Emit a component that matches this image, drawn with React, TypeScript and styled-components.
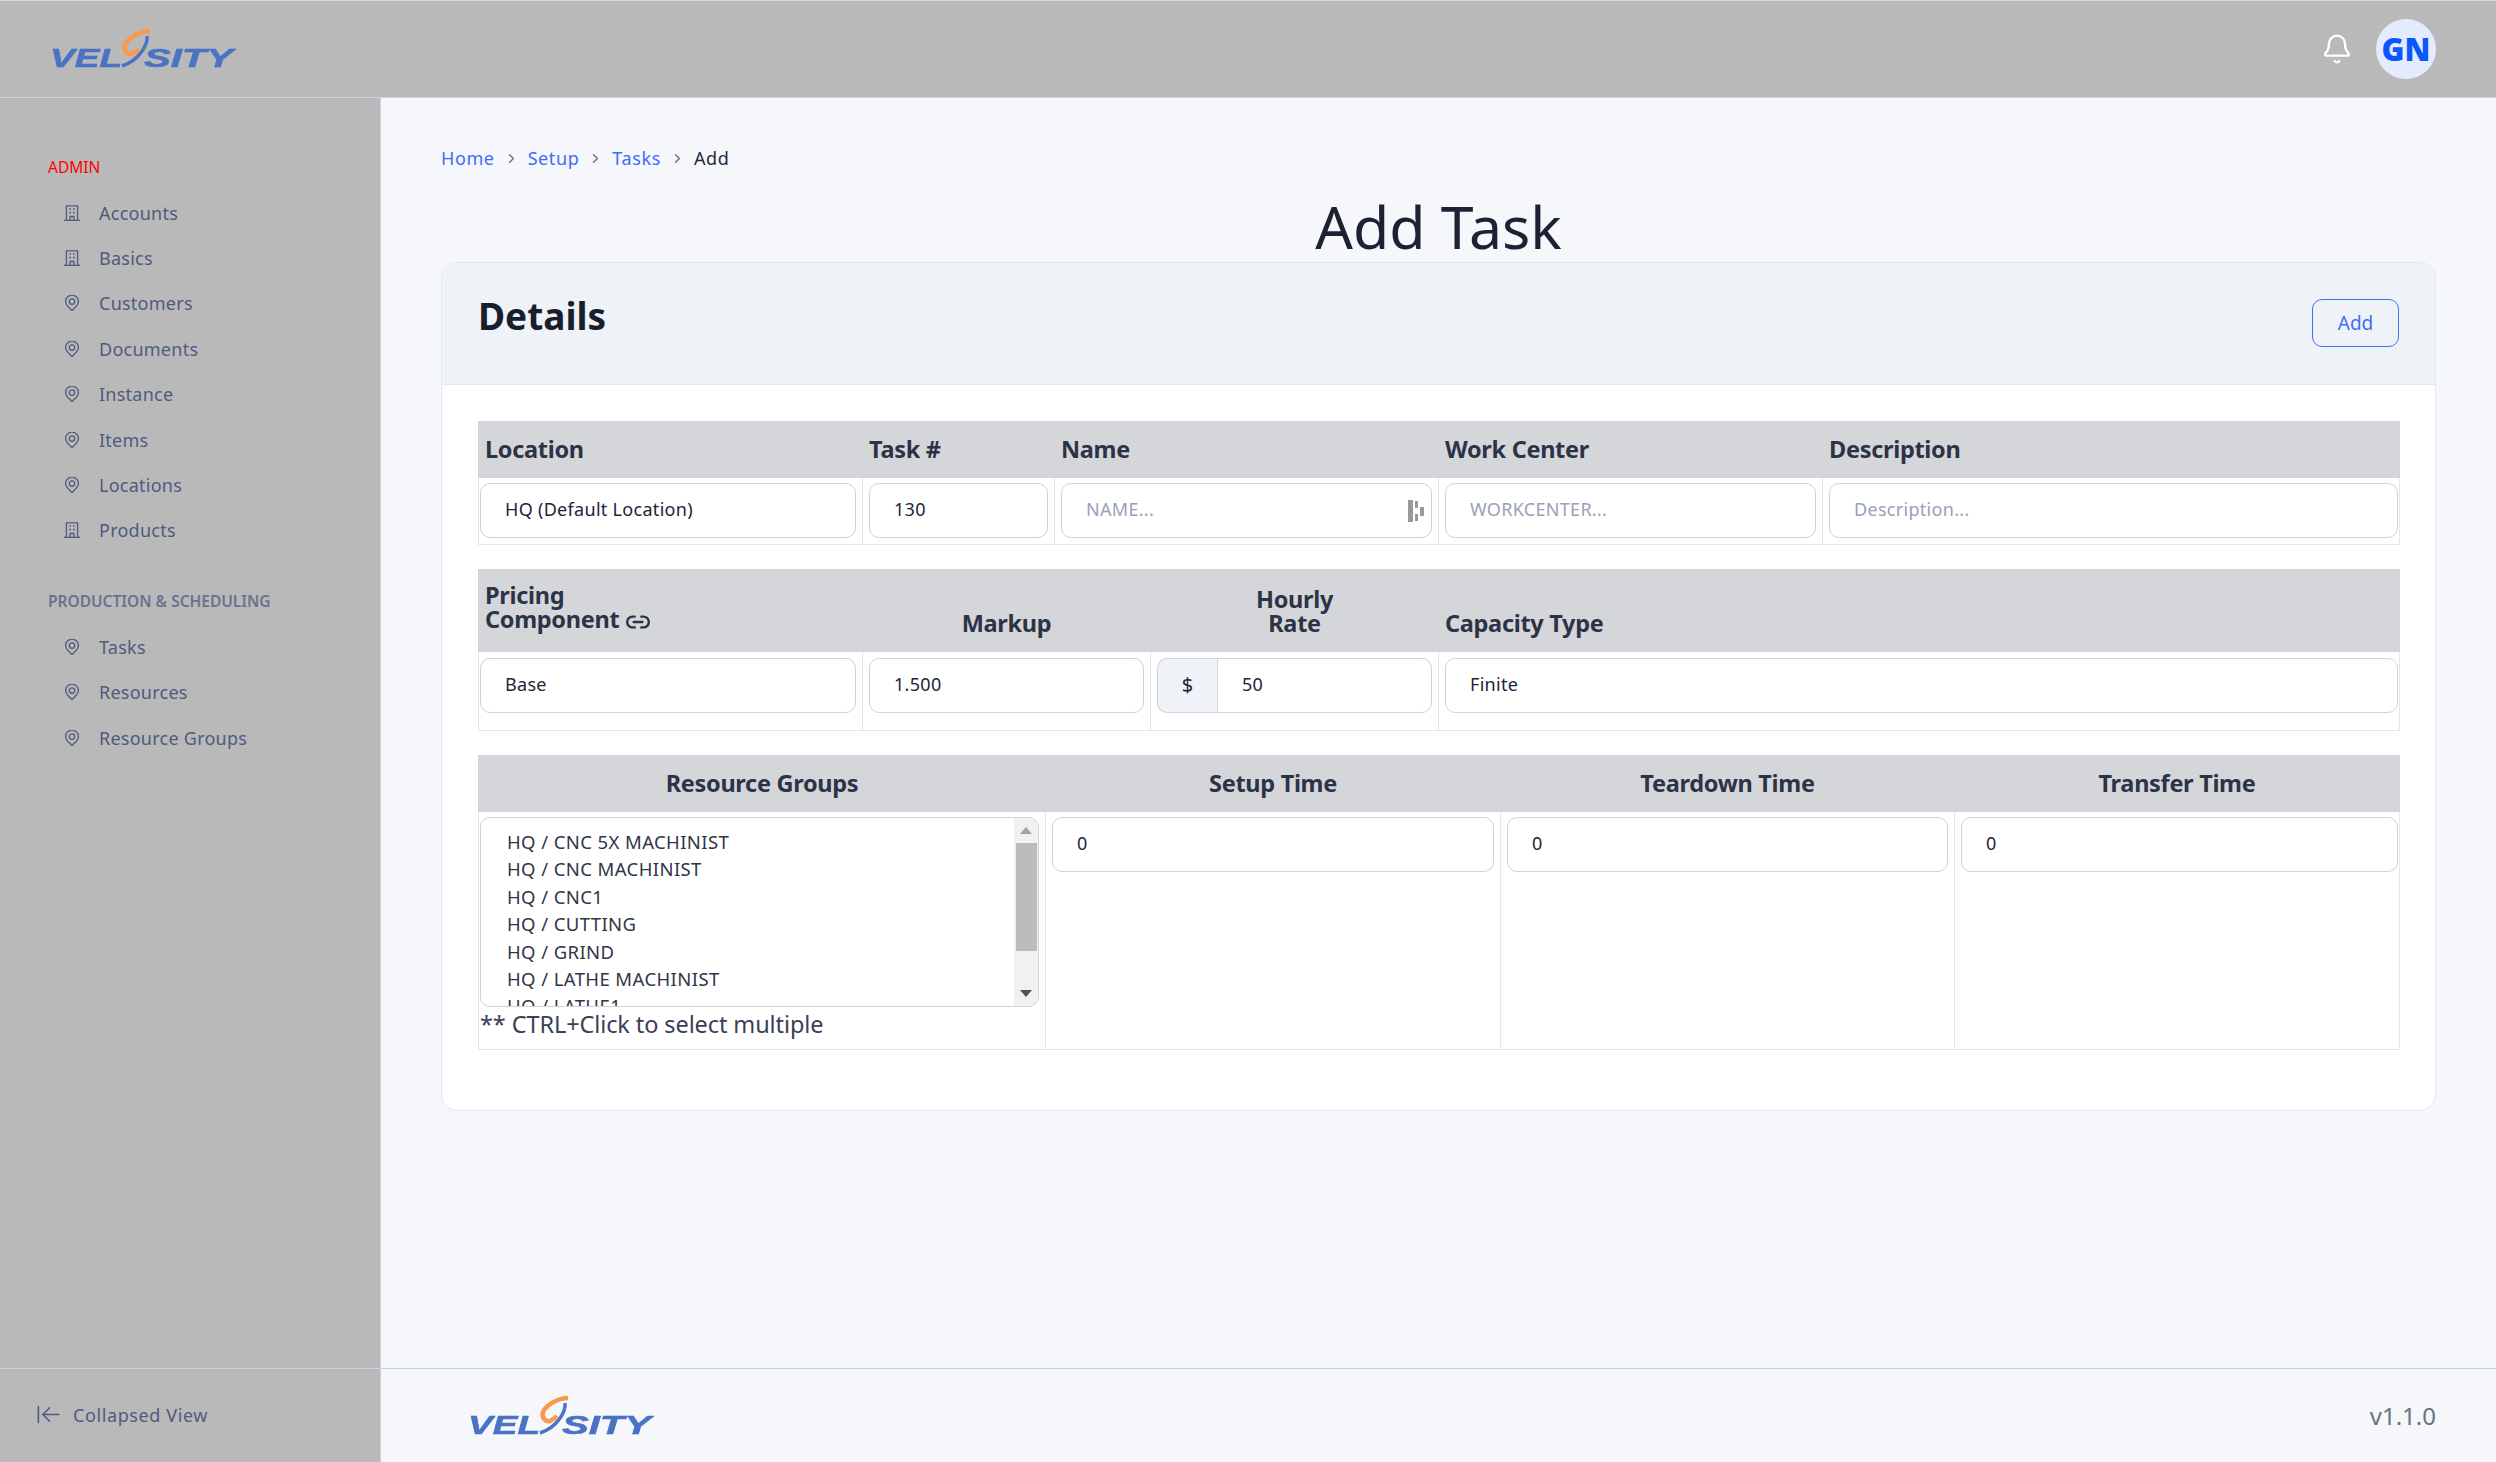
import { ArrowLeftToLine, Bell, ChevronRight, Link2 } from "lucide-react";
import styled, { createGlobalStyle } from "styled-components";

const FONT = `"Noto Sans", Lato, "Liberation Sans", sans-serif`;

const GlobalStyle = createGlobalStyle`
  html, body {
    margin: 0;
    padding: 0;
    background: #f5f7fb;
    font-family: ${FONT};
    color: #1e2436;
  }
  * { box-sizing: border-box; }
`;

const Page = styled.div`
  height: 100vh;
  display: flex;
  flex-direction: column;
  overflow: hidden;
`;

const TopBar = styled.header`
  flex: 0 0 98px;
  display: flex;
  align-items: center;
  justify-content: space-between;
  padding: 0 60px 0 50px;
  background: #b9b9b9;
  border-top: 1px solid #d9d9d9;
  border-bottom: 1px solid #ced2dc;
`;

const TopActions = styled.div`
  display: flex;
  align-items: center;
  gap: 23px;
  color: #fff;
`;

const Avatar = styled.div`
  width: 60px;
  height: 60px;
  border-radius: 50%;
  background: #e4ebff;
  color: #0b57fb;
  display: flex;
  align-items: center;
  justify-content: center;
  font-size: 31px;
  font-weight: 900;
`;

const Body = styled.div`
  flex: 1;
  display: flex;
  min-height: 0;
`;

const Sidebar = styled.aside`
  flex: 0 0 381px;
  display: flex;
  flex-direction: column;
  background: #b9b9b9;
  border-right: 1px solid #c9d0e2;
`;

const Nav = styled.nav`
  flex: 1;
  padding-top: 52px;
`;

const SectionLabel = styled.div<{ $active?: boolean }>`
  height: 34px;
  margin: ${(p) => (p.$active ? "0" : "31px")} 0 6px;
  padding-left: 48px;
  line-height: 34px;
  font-size: 15.5px;
  font-weight: ${(p) => (p.$active ? 400 : 600)};
  color: ${(p) => (p.$active ? "#ff0000" : "#68738f")};
`;

const NavItem = styled.a`
  height: 45.4px;
  display: flex;
  align-items: center;
  gap: 19px;
  padding-left: 64px;
  font-size: 18px;
  letter-spacing: 0.25px;
  color: #4f5b7e;
`;

const IconSlot = styled.svg`
  flex: 0 0 16px;
  width: 16px;
  height: 16px;
  fill: none;
  stroke: #4f5b7e;
  stroke-width: 1.3;
`;

const Collapse = styled.div`
  flex: 0 0 94px;
  display: flex;
  align-items: center;
  gap: 11px;
  padding: 0 0 2px 35px;
  border-top: 1px solid #c9d0e2;
  font-size: 18px;
  letter-spacing: 0.6px;
  color: #4f5b7e;
`;

const Main = styled.main`
  flex: 1;
  min-width: 0;
  display: flex;
  flex-direction: column;
`;

const Content = styled.div`
  flex: 1;
  padding: 46px 60px 0;
`;

const Crumbs = styled.div`
  display: flex;
  align-items: center;
  height: 28px;
  gap: 9px;
  font-size: 18px;
  letter-spacing: 0.6px;
  color: #6f7689;
`;

const Crumb = styled.a<{ $current?: boolean }>`
  color: ${(p) => (p.$current ? "#252b3b" : "#3f6cf8")};
`;

const Title = styled.h1`
  margin: 18px 0 0;
  height: 72px;
  line-height: 72px;
  text-align: center;
  font-size: 59px;
  font-weight: 400;
  color: #1c2233;
`;

const Card = styled.section`
  background: #fff;
  border: 1px solid #e4e7ef;
  border-radius: 16px;
  overflow: hidden;
`;

const CardHead = styled.div`
  height: 122px;
  display: flex;
  justify-content: space-between;
  padding: 28px 36px 0;
  background: #eff2f7;
  border-bottom: 1px solid #e4e7ef;
`;

const CardTitle = styled.h2`
  margin: 0;
  line-height: 50px;
  font-size: 37px;
  font-weight: 700;
  color: #181e2e;
`;

const AddButton = styled.button`
  width: 87px;
  height: 48px;
  margin-top: 8px;
  background: transparent;
  border: 1.5px solid #3f74f6;
  border-radius: 10px;
  font-family: ${FONT};
  font-size: 19px;
  color: #3f6cf8;
`;

const CardBody = styled.div`
  padding: 36px 35px 60px 36px;
`;

const Grid = styled.table<{ $gap?: number }>`
  width: 1921px;
  margin-top: ${(p) => p.$gap ?? 0}px;
  table-layout: fixed;
  border-collapse: collapse;
`;

const Col = styled.col<{ $w: number }>`
  width: ${(p) => p.$w}px;
`;

const HeadRow = styled.tr<{ $h: number }>`
  height: ${(p) => p.$h}px;
`;

const Head = styled.th<{ $center?: boolean }>`
  padding: 0 6px 16px;
  vertical-align: bottom;
  text-align: ${(p) => (p.$center ? "center" : "left")};
  background: #d5d6da;
  border: 1px solid #cfd3dc;
  line-height: 24px;
  font-size: 23.5px;
  font-weight: 700;
  letter-spacing: -0.3px;
  color: #2c3346;
`;

const LinkMark = styled(Link2)`
  vertical-align: -7px;
`;

const Cell = styled.td<{ $h: number; $top?: number }>`
  height: ${(p) => p.$h}px;
  padding: ${(p) => p.$top ?? 5}px 6px 0;
  vertical-align: top;
  border: 1px solid #e4e7ef;

  &:first-child { padding-left: 1px; }
  &:last-child { padding-right: 1px; }
`;

const Field = styled.input`
  display: block;
  width: 100%;
  height: 55px;
  padding: 0 24px 3px;
  background: #fff;
  border: 1.5px solid #d0d3de;
  border-radius: 10px;
  outline: none;
  font-family: ${FONT};
  font-size: 18px;
  letter-spacing: 0.3px;
  color: #1e2436;

  &::placeholder { color: #9aa1b6; opacity: 1; }
`;

const FieldWrap = styled.div`
  position: relative;
`;

const AutofillMark = styled.svg`
  position: absolute;
  right: 7px;
  top: 17px;
  width: 17px;
  height: 22px;
  fill: #9a9a98;
`;

const Group = styled.div`
  display: flex;
`;

const Addon = styled.span`
  flex: 0 0 60px;
  height: 55px;
  display: flex;
  align-items: center;
  justify-content: center;
  padding-bottom: 3px;
  background: #eff2f7;
  border: 1.5px solid #d0d3de;
  border-right: 0;
  border-radius: 10px 0 0 10px;
  font-size: 20px;
`;

const GroupField = styled(Field)`
  border-radius: 0 10px 10px 0;
`;

const ListBox = styled.div`
  height: 190px;
  display: flex;
  background: #fff;
  border: 1.5px solid #d0d3de;
  border-radius: 10px;
  overflow: hidden;
`;

const ListItems = styled.div`
  flex: 1;
  min-width: 0;
  padding: 10px 0 0 26px;
  font-size: 18.5px;
  letter-spacing: 0.4px;
  color: #2f3648;
`;

const ListItem = styled.div`
  height: 27.4px;
  line-height: 27.4px;
`;

const ScrollTrack = styled.div`
  flex: 0 0 24px;
  display: flex;
  flex-direction: column;
  align-items: center;
  background: #f1f1f1;
`;

const ScrollThumb = styled.div`
  flex: 0 0 108px;
  width: 21px;
  margin-bottom: auto;
  background: #bcbcbc;
`;

const ScrollArrow = styled.div<{ $up?: boolean }>`
  flex: 0 0 25px;
  display: flex;
  align-items: center;
  justify-content: center;
  color: ${(p) => (p.$up ? "#a3a3a3" : "#505050")};
`;

const Note = styled.div`
  line-height: 34px;
  font-size: 23.5px;
  letter-spacing: -0.1px;
  color: #3a4154;
`;

const Footer = styled.footer`
  flex: 0 0 94px;
  display: flex;
  align-items: center;
  justify-content: space-between;
  padding: 0 60px 0 87px;
  border-top: 1px solid #c9d0e2;
`;

const Version = styled.span`
  font-size: 24px;
  color: #6b7280;
`;

const LogoMark = styled.svg`
  display: block;
  width: 184px;
  height: 38px;
  overflow: visible;
  filter: blur(0.45px);
`;

const Logo = () => (
  <LogoMark viewBox="0 0 184 38">
    <g
      fill="#4a73c4"
      stroke="#4a73c4"
      strokeWidth="0.6"
      fontFamily="'Liberation Sans', sans-serif"
      fontSize="26.5"
      fontStyle="italic"
      fontWeight="700"
    >
      <text x="0" y="37" textLength="72" lengthAdjust="spacingAndGlyphs">
        VEL
      </text>
      <text x="94" y="37" textLength="89" lengthAdjust="spacingAndGlyphs">
        SITY
      </text>
    </g>
    <path d="M97 6C98 14 90 30 72 36" fill="none" stroke="#4a73c4" strokeWidth="3.5" />
    <path
      d="M100 1C90 1 78 8 75 15C73 21 78 25 82 24C85 23 87 21 89 19"
      fill="none"
      stroke="#f79a4d"
      strokeWidth="4.5"
    />
  </LogoMark>
);

const BuildingIcon = () => (
  <IconSlot viewBox="0 0 16 16">
    <path d="M0 15.4H16M2.4 15.4V.8H13.6V15.4M6 15.4V11.5H10V15.4" />
    <path d="M5.4 4H7M9 4H10.6M5.4 7.6H7M9 7.6H10.6" strokeWidth="1.6" />
  </IconSlot>
);

const PinIcon = () => (
  <IconSlot viewBox="0 0 16 16">
    <path d="M8 15.6C5 13 1.6 10 1.6 6.6A6.4 6.4 0 0 1 14.4 6.6C14.4 10 11 13 8 15.6Z" />
    <circle cx="8" cy="6.6" r="2.7" />
  </IconSlot>
);

const adminItems = [
  { label: "Accounts", icon: "building" },
  { label: "Basics", icon: "building" },
  { label: "Customers", icon: "pin" },
  { label: "Documents", icon: "pin" },
  { label: "Instance", icon: "pin" },
  { label: "Items", icon: "pin" },
  { label: "Locations", icon: "pin" },
  { label: "Products", icon: "building" },
];

const productionItems = ["Tasks", "Resources", "Resource Groups"];

const resourceGroups = [
  "HQ / CNC 5X MACHINIST",
  "HQ / CNC MACHINIST",
  "HQ / CNC1",
  "HQ / CUTTING",
  "HQ / GRIND",
  "HQ / LATHE MACHINIST",
  "HQ / LATHE1",
];

export default function App() {
  return (
    <Page>
      <GlobalStyle />
      <TopBar>
        <Logo />
        <TopActions>
          <Bell size={32} strokeWidth={1.8} />
          <Avatar>GN</Avatar>
        </TopActions>
      </TopBar>
      <Body>
        <Sidebar>
          <Nav>
            <SectionLabel $active>ADMIN</SectionLabel>
            {adminItems.map((item) => (
              <NavItem key={item.label}>
                {item.icon === "building" ? <BuildingIcon /> : <PinIcon />}
                {item.label}
              </NavItem>
            ))}
            <SectionLabel>PRODUCTION &amp; SCHEDULING</SectionLabel>
            {productionItems.map((label) => (
              <NavItem key={label}>
                <PinIcon />
                {label}
              </NavItem>
            ))}
          </Nav>
          <Collapse>
            <ArrowLeftToLine size={27} strokeWidth={1.4} />
            Collapsed View
          </Collapse>
        </Sidebar>
        <Main>
          <Content>
            <Crumbs>
              <Crumb>Home</Crumb>
              <ChevronRight size={15} strokeWidth={2.5} />
              <Crumb>Setup</Crumb>
              <ChevronRight size={15} strokeWidth={2.5} />
              <Crumb>Tasks</Crumb>
              <ChevronRight size={15} strokeWidth={2.5} />
              <Crumb $current>Add</Crumb>
            </Crumbs>
            <Title>Add Task</Title>
            <Card>
              <CardHead>
                <CardTitle>Details</CardTitle>
                <AddButton type="button">Add</AddButton>
              </CardHead>
              <CardBody>
                <Grid>
                  <colgroup>
                    <Col $w={384} />
                    <Col $w={192} />
                    <Col $w={384} />
                    <Col $w={384} />
                    <Col $w={577} />
                  </colgroup>
                  <thead>
                    <HeadRow $h={56}>
                      <Head>Location</Head>
                      <Head>Task #</Head>
                      <Head>Name</Head>
                      <Head>Work Center</Head>
                      <Head>Description</Head>
                    </HeadRow>
                  </thead>
                  <tbody>
                    <tr>
                      <Cell $h={67}>
                        <Field readOnly value="HQ (Default Location)" />
                      </Cell>
                      <Cell $h={67}>
                        <Field readOnly value="130" />
                      </Cell>
                      <Cell $h={67}>
                        <FieldWrap>
                          <Field readOnly placeholder="NAME..." />
                          <AutofillMark viewBox="0 0 17 22">
                            <rect x="0" y="0" width="5" height="22" />
                            <rect x="7" y="1" width="3" height="7" />
                            <rect x="7" y="14" width="3" height="7" />
                            <rect x="12" y="7" width="4" height="9" />
                          </AutofillMark>
                        </FieldWrap>
                      </Cell>
                      <Cell $h={67}>
                        <Field readOnly placeholder="WORKCENTER..." />
                      </Cell>
                      <Cell $h={67}>
                        <Field readOnly placeholder="Description..." />
                      </Cell>
                    </tr>
                  </tbody>
                </Grid>
                <Grid $gap={24}>
                  <colgroup>
                    <Col $w={384} />
                    <Col $w={288} />
                    <Col $w={288} />
                    <Col $w={961} />
                  </colgroup>
                  <thead>
                    <HeadRow $h={82}>
                      <Head>
                        Pricing
                        <br />
                        Component <LinkMark size={26} strokeWidth={2.2} />
                      </Head>
                      <Head $center>Markup</Head>
                      <Head $center>
                        Hourly
                        <br />
                        Rate
                      </Head>
                      <Head>Capacity Type</Head>
                    </HeadRow>
                  </thead>
                  <tbody>
                    <tr>
                      <Cell $h={79} $top={6}>
                        <Field readOnly value="Base" />
                      </Cell>
                      <Cell $h={79} $top={6}>
                        <Field readOnly value="1.500" />
                      </Cell>
                      <Cell $h={79} $top={6}>
                        <Group>
                          <Addon>$</Addon>
                          <GroupField readOnly value="50" />
                        </Group>
                      </Cell>
                      <Cell $h={79} $top={6}>
                        <Field readOnly value="Finite" />
                      </Cell>
                    </tr>
                  </tbody>
                </Grid>
                <Grid $gap={24}>
                  <colgroup>
                    <Col $w={567} />
                    <Col $w={455} />
                    <Col $w={454} />
                    <Col $w={445} />
                  </colgroup>
                  <thead>
                    <HeadRow $h={56}>
                      <Head $center>Resource Groups</Head>
                      <Head $center>Setup Time</Head>
                      <Head $center>Teardown Time</Head>
                      <Head $center>Transfer Time</Head>
                    </HeadRow>
                  </thead>
                  <tbody>
                    <tr>
                      <Cell $h={238}>
                        <ListBox>
                          <ListItems>
                            {resourceGroups.map((group) => (
                              <ListItem key={group}>{group}</ListItem>
                            ))}
                          </ListItems>
                          <ScrollTrack>
                            <ScrollArrow $up>
                              <svg width="12" height="7" viewBox="0 0 12 7">
                                <path d="M6 0L12 7H0Z" fill="currentColor" />
                              </svg>
                            </ScrollArrow>
                            <ScrollThumb />
                            <ScrollArrow>
                              <svg width="12" height="7" viewBox="0 0 12 7">
                                <path d="M0 0H12L6 7Z" fill="currentColor" />
                              </svg>
                            </ScrollArrow>
                          </ScrollTrack>
                        </ListBox>
                        <Note>** CTRL+Click to select multiple</Note>
                      </Cell>
                      <Cell $h={238}>
                        <Field readOnly value="0" />
                      </Cell>
                      <Cell $h={238}>
                        <Field readOnly value="0" />
                      </Cell>
                      <Cell $h={238}>
                        <Field readOnly value="0" />
                      </Cell>
                    </tr>
                  </tbody>
                </Grid>
              </CardBody>
            </Card>
          </Content>
          <Footer>
            <Logo />
            <Version>v1.1.0</Version>
          </Footer>
        </Main>
      </Body>
    </Page>
  );
}
